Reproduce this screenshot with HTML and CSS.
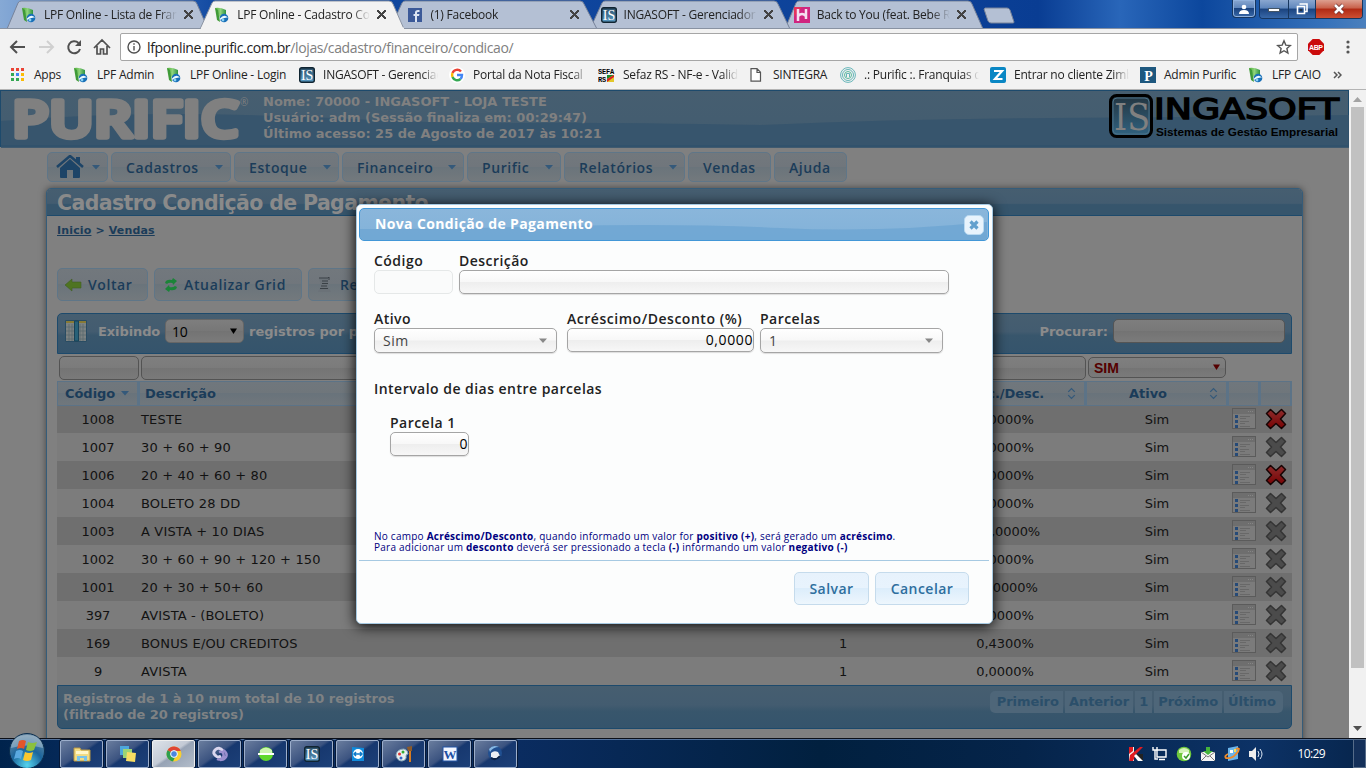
FILE: index.html
```html
<!DOCTYPE html>
<html lang="pt-BR">
<head>
<meta charset="utf-8">
<title>LPF Online - Cadastro Condição de Pagamento</title>
<link rel="stylesheet" href="styles.css">
</head>
<body>
<svg class="defs" aria-hidden="true">
  <defs>
    <linearGradient id="leafg" x1="0" x2="1"><stop offset="0" stop-color="#4fae35"/><stop offset=".5" stop-color="#8ed37c"/><stop offset="1" stop-color="#2d9340"/></linearGradient>
    <linearGradient id="isg" x1="0" y1="0" x2="0" y2="1"><stop offset="0" stop-color="#2a4d66"/><stop offset="1" stop-color="#5b9dc7"/></linearGradient>
    <linearGradient id="redx" x1="0" y1="0" x2="0" y2="1"><stop offset="0" stop-color="#8d2c2c"/><stop offset="1" stop-color="#780304"/></linearGradient>
  </defs>
  <symbol id="i-lpf" viewBox="0 0 16 16"><path d="M1 1q5-1 11 2v9l-5 1z" fill="url(#leafg)"/><path d="M1 1l3 2 2 12-3-2z" fill="#3f9a37"/><circle cx="10" cy="11" r="4.300" fill="#1970b8"/><path d="M6 11.500q4-5 8-1-4-.500-8 2.500z" fill="#eefaff"/><circle cx="9" cy="13" r="1.400" fill="#8bd0f3"/></symbol>
  <symbol id="i-is" viewBox="0 0 16 16"><rect x=".7" y=".7" width="14.600" height="14.600" rx="2" fill="url(#isg)" stroke="#102431" stroke-width="1.400"/><text x="8" y="13" text-anchor="middle" class="t-is">IS</text></symbol>
  <symbol id="i-list" viewBox="0 0 24 22"><rect x=".5" y=".5" width="23" height="20" fill="#7b7b7b" stroke="#5b5b5b"/><path d="M1 1h22v5H1z" fill="#6e6e6e"/><path d="M16 3.500h6" stroke="#858585" stroke-dasharray="1 1"/><path d="M3 7h3v3H3zM3 12h3v3H3zM3 17h3v3H3z" fill="#264a77"/><path d="M8 8.500h10M8 10.500h6M8 13.500h9M8 15.500h5M8 18.500h10" stroke="#686868"/></symbol>
  <symbol id="i-x" viewBox="0 0 22 22"><path d="M5.500 1.500L11 6.500l5.500-5 4 4-5 5.500 5 5.500-4 4-5.500-5-5.500 5-4-4 5-5.500-5-5.500z" stroke-linejoin="round" stroke-width="1.500"/></symbol>
  <symbol id="i-sort" viewBox="0 0 8 12"><path d="M1 4.500L4 1.500l3 3M1 7.500l3 3 3-3" fill="none" stroke="#34597a" stroke-width="1.200"/></symbol>
  <symbol id="i-down" viewBox="0 0 8 5"><path d="M0 0h8L4 4.500z"/></symbol>
</svg>

<div class="browser">
  <div class="tabstrip">
    <svg class="tabshapes" width="1366" height="29">
      <g fill="#b4c0d4" stroke="#77839a">
        <path d="M785 29L796 3q1-2 3-2h169q3 0 4 3l11 25z"/>
        <path d="M590 29L602 3q1-2 3-2h169q3 0 4 3l12 25z"/>
        <path d="M390 29L402 3q1-2 3-2h175q3 0 4 3l13 25z"/>
        <path d="M7 29L18 3q1-2 3-2h172q3 0 4 3l11 25z"/>
        <path d="M985 8h22q2 0 3 2l4 12q0 1-1 1h-22q-2 0-3-2l-4-12z"/>
      </g>
      <path d="M0 28.500h1366" stroke="#8892a2"/>
      <path d="M200 29L212 3q1-2 3-2h174q3 0 4 3l11 25z" fill="#f2f2f2" stroke="#8b94a3"/><path d="M201 28.500h203" stroke="#f2f2f2" stroke-width="2"/>
    </svg>
    <div class="tab"><svg width="16" height="16"><use href="#i-lpf"/></svg><span>LPF Online - Lista de Franquias</span><i class="close"></i></div>
    <div class="tab on"><svg width="16" height="16"><use href="#i-lpf"/></svg><span>LPF Online - Cadastro Condição</span><i class="close"></i></div>
    <div class="tab"><svg width="16" height="16"><rect x="1" y="1" width="14" height="14" fill="#3b5998"/><path d="M8 15V9H6.500V7H8V5.500Q8 3 11 3h1.500v2H11q-1 0-1 1v1h2.500L12 9h-2v6z" fill="#dbe3f1"/></svg><span>(1) Facebook</span><i class="close"></i></div>
    <div class="tab"><svg width="16" height="16"><use href="#i-is"/></svg><span>INGASOFT - Gerenciador</span><i class="close"></i></div>
    <div class="tab"><svg width="16" height="16"><rect width="16" height="16" fill="#d02580"/><path d="M0 0h8L0 10z" fill="#e5335c"/><path d="M4 2v12M12 2v10M4 9q4-4 8 0" stroke="#f5dff0" stroke-width="2.500" fill="none"/></svg><span>Back to You (feat. Bebe Rexha)</span><i class="close"></i></div>
    <div class="winbtns">
      <div class="wb user"><svg width="12" height="12"><circle cx="6" cy="4" r="2.300"/><path d="M1 11q0-4 5-4t5 4z"/></svg></div>
      <div class="wbg"><div class="wb"><svg width="12" height="10"><rect x=".5" y="4.500" width="11" height="3" stroke="#456"/></svg></div><div class="wb"><svg width="12" height="12" class="restore"><path d="M3.500 1h7.500v7.500H9M1.500 3.500h7v7h-7z" fill="none" stroke="#fff" stroke-width="1.600"/><path d="M4 6h2v2H4z" fill="#234"/></svg></div><div class="wb red"><svg width="14" height="12"><path d="M3 2l8 8M11 2l-8 8" stroke="#6b3030" stroke-width="4"/><path d="M3 2l8 8M11 2l-8 8" stroke="#fff" stroke-width="2.600"/></svg></div></div>
    </div>
  </div>

  <div class="toolbar">
    <svg width="112" height="32" class="nav" fill="none" stroke="#505050" stroke-width="2">
      <path d="M17 10l-6 6 6 6M11.500 16H25"/><path d="M47 10l6 6-6 6M52 16H39" stroke="#d0d0d0"/>
      <path d="M78.500 12a6 6 0 1 0 1.500 6"/><path d="M81 9v6h-6z" fill="#505050" stroke="none"/>
      <path d="M94 17l8-8 8 8M97 15v8h3.500v-5h3v5h3.500v-8" stroke-width="1.700"/>
    </svg>
    <div class="urlbar">
      <svg width="14" height="14" fill="none" stroke="#505050" stroke-width="1.400"><circle cx="7" cy="7" r="6"/><path d="M7 6v4.500M7 3.200v1.600"/></svg>
      <span class="url"><b>lfponline.purific.com.br</b>/lojas/cadastro/financeiro/condicao/</span>
      <svg width="16" height="16" fill="none" stroke="#555" stroke-width="1.400"><path d="M8 1.800l1.800 4.300 4.600.4-3.500 3 1 4.600L8 11.700l-3.900 2.400 1-4.600-3.500-3 4.600-.4z"/></svg>
    </div>
    <svg width="16" height="16" class="abp"><path d="M4.700 0h6.600L16 4.700v6.600L11.300 16H4.700L0 11.300V4.700z" fill="#cb0b0b"/><text x="8" y="10.800" text-anchor="middle" textLength="14">ABP</text></svg>
    <svg width="4" height="16" class="dots"><circle cx="2" cy="3" r="1.600"/><circle cx="2" cy="8" r="1.600"/><circle cx="2" cy="13" r="1.600"/></svg>
  </div>

  <div class="bookmarks">
    <div><svg width="16" height="16"><path d="M1 1h3v3H1zM6 1h3v3H6zM11 1h3v3h-3z" fill="#ea4335"/><path d="M1 6h3v3H1zM1 11h3v3H1z" fill="#34a853"/><path d="M6 6h3v3H6z" fill="#4285f4"/><path d="M6 11h3v3H6z" fill="#34a853"/><path d="M11 6h3v3h-3zM11 11h3v3h-3z" fill="#fbbc05"/></svg><span>Apps</span></div>
    <div><svg width="16" height="16"><use href="#i-lpf"/></svg><span>LPF Admin</span></div>
    <div><svg width="16" height="16"><use href="#i-lpf"/></svg><span>LPF Online - Login</span></div>
    <div><svg width="16" height="16"><use href="#i-is"/></svg><span class="cut">INGASOFT - Gerenciador</span></div>
    <div><svg width="16" height="16" fill="none" stroke-width="2.400"><circle cx="8" cy="8" r="8" fill="#fff"/><path d="M12 4.500A5 5 0 0 0 3.500 6" stroke="#ea4335"/><path d="M3.500 6a5 5 0 0 0 0 4" stroke="#fbbc05"/><path d="M3.500 10a5 5 0 0 0 8 2" stroke="#34a853"/><path d="M11.500 12q1.500-1.500 1.500-4H8" stroke="#4285f4"/></svg><span class="cut">Portal da Nota Fiscal</span></div>
    <div><svg width="17" height="16"><text x="0" y="6.500" class="t-sefa" textLength="16">SEFA</text><text x="0" y="14.500" class="t-sefa" textLength="8">RS</text><path d="M9 8h7v7H9z" fill="#e3c72a"/><path d="M9 8h7l-7 4z" fill="#1b8a2c"/><path d="M9 12l7-4v2l-7 5z" fill="#d22"/></svg><span class="cut">Sefaz RS - NF-e - Validador</span></div>
    <div class="doc"><svg width="12" height="16"><path d="M1 1.700h6l3.500 3.500v9H1zM7 2v3.500h3.500" fill="#fff" stroke="#555" stroke-width="1.200"/></svg><span>SINTEGRA</span></div>
    <div><svg width="16" height="16" fill="none" stroke="#66b5b8"><circle cx="8" cy="8" r="7.400"/><circle cx="8" cy="8" r="5.500"/><circle cx="8" cy="8" r="3.500" stroke="#58b89b"/><path d="M6.500 10V6.500h3V10"/></svg><span class="cut">.: Purific :. Franquias de</span></div>
    <div><svg width="16" height="16"><rect width="16" height="16" rx="2" fill="#0a87c4"/><path d="M4 4h8l-7 8h7.500" fill="none" stroke="#fff" stroke-width="2.200"/></svg><span class="cut">Entrar no cliente Zimbra</span></div>
    <div><svg width="16" height="16"><rect width="16" height="16" fill="#1e587f"/><text x="8.500" y="13.500" text-anchor="middle" class="t-p">P</text></svg><span>Admin Purific</span></div>
    <div><svg width="16" height="16"><use href="#i-lpf"/></svg><span>LFP CAIO</span></div>
    <div><svg width="9" height="8" fill="none" stroke="#555" stroke-width="1.500"><path d="M1 1l3 3-3 3M5 1l3 3-3 3"/></svg></div>
  </div>
</div>

<div class="viewport">
  <div class="page">
    <header class="top">
      <svg class="wave" width="1349" height="57" preserveAspectRatio="none"><path d="M0 30Q90 23 170 23T350 28 520 32 760 34Q900 28 1050 27T1349 24V57H0z"/></svg>
      <svg class="purific" width="252" height="57"><text x="11" y="45.500" textLength="227" lengthAdjust="spacingAndGlyphs">PURIFIC</text><text x="239" y="15" class="reg">®</text></svg>
      <div class="userinfo">Nome: 70000 - INGASOFT - LOJA TESTE<br>Usuário: adm (Sessão finaliza em: 00:29:47)<br>Último acesso: 25 de Agosto de 2017 às 10:21</div>
      <svg class="inga" width="232" height="50"><defs><linearGradient id="ib" x1="0" y1="0" x2="0" y2="1"><stop offset="0" stop-color="#23343f"/><stop offset="1" stop-color="#316482"/></linearGradient></defs><rect x="1.500" y="4.500" width="41" height="41" rx="6" fill="url(#ib)" stroke="#000" stroke-width="3"/><rect x="4" y="7" width="36" height="36" rx="4" fill="none" stroke="#4b7187"/><text x="5" y="39" class="big-is" textLength="36" lengthAdjust="spacingAndGlyphs">IS</text><text x="45" y="28" class="inga-name" textLength="185" lengthAdjust="spacingAndGlyphs">INGASOFT</text><text x="47" y="45" class="inga-sub" textLength="182" lengthAdjust="spacingAndGlyphs">Sistemas de Gestão Empresarial</text></svg>
    </header>

    <nav class="menu">
      <div class="btn home"><svg width="28" height="24"><path d="M1 12L14 1l13 11" fill="none" stroke="#1d4467" stroke-width="2.600"/><path d="M4 13l10-9 10 9v9q0 1-1 1h-6v-8h-6v8H5q-1 0-1-1zM20 2h4v7l-4-3z" fill="#1d4467"/></svg><svg class="dn"><use href="#i-down"/></svg></div>
      <div class="btn">Cadastros<svg class="dn"><use href="#i-down"/></svg></div>
      <div class="btn">Estoque<svg class="dn"><use href="#i-down"/></svg></div>
      <div class="btn">Financeiro<svg class="dn"><use href="#i-down"/></svg></div>
      <div class="btn">Purific<svg class="dn"><use href="#i-down"/></svg></div>
      <div class="btn">Relatórios<svg class="dn"><use href="#i-down"/></svg></div>
      <div class="btn">Vendas</div>
      <div class="btn">Ajuda</div>
    </nav>

    <main class="panel">
      <h1>Cadastro Condição de Pagamento</h1>
      <div class="content">
        <div class="crumbs"><u>Inicio</u> &gt; <u>Vendas</u></div>
        <div class="actions">
          <div class="btn"><svg width="17" height="14"><path d="M0 7l7-6v3h9v6H7v3z" fill="#4f7422" stroke="#405e25" stroke-width=".6"/></svg>Voltar</div>
          <div class="btn"><svg width="14" height="16"><path d="M1 6Q2 2 8 3L9 1l4 3-4 4-.500-2Q5 5 3 7zM13 10q-1 4-7 3l-1 2-4-3 4-4 .500 2q3 1 5.500-1z" fill="#1b8439"/></svg>Atualizar Grid</div>
          <div class="btn"><svg width="16" height="17"><path d="M2 2h9v9l3 5H1l2-4 1-2z" fill="#6b7278"/><path d="M2 2h9l1-1v3M5 5h6M5 7.500h6M4 10h6M3 12.500h8" stroke="#3a4146" fill="none"/></svg>Relatório</div>
        </div>

        <div class="gridbar">
          <svg width="22" height="22"><path d="M.5.500h21v21H.500z" fill="#7c8282" stroke="#294c63"/><path d="M1 2h20" stroke="#877a35" stroke-width="2"/><path d="M4 4v17M7 4v17M15 4v17M18 4v17M1 7h20M1 11h20M1 15h20M1 19h20" stroke="#58676f" stroke-width=".7"/><path d="M9.500 1h4v20h-4z" fill="#276178" stroke="#194257"/></svg>
          <span>Exibindo</span><div class="select">10<svg class="dn"><use href="#i-down"/></svg></div><span>registros por página</span>
          <span class="find">Procurar:</span><div class="search"></div>
        </div>

        <div class="filters"><div></div><div></div><div></div><div></div><div class="sim">SIM<svg class="dn"><use href="#i-down"/></svg></div></div>

        <div class="tr thead"><div>Código<svg class="dn"><use href="#i-down"/></svg></div><div>Descrição</div><div>Parcelas</div><div>Acresc./Desc.<svg class="st"><use href="#i-sort"/></svg></div><div>Ativo<svg class="st"><use href="#i-sort"/></svg></div><div></div><div></div></div>
        <div class="tr"><div>1008</div><div>TESTE</div><div>1</div><div>0,0000%</div><div>Sim</div><div><svg><use href="#i-list"/></svg></div><div class="del red"><svg><use href="#i-x"/></svg></div></div>
        <div class="tr"><div>1007</div><div>30 + 60 + 90</div><div>3</div><div>0,0000%</div><div>Sim</div><div><svg><use href="#i-list"/></svg></div><div class="del"><svg><use href="#i-x"/></svg></div></div>
        <div class="tr"><div>1006</div><div>20 + 40 + 60 + 80</div><div>4</div><div>0,0000%</div><div>Sim</div><div><svg><use href="#i-list"/></svg></div><div class="del red"><svg><use href="#i-x"/></svg></div></div>
        <div class="tr"><div>1004</div><div>BOLETO 28 DD</div><div>1</div><div>0,0000%</div><div>Sim</div><div><svg><use href="#i-list"/></svg></div><div class="del"><svg><use href="#i-x"/></svg></div></div>
        <div class="tr"><div>1003</div><div>A VISTA + 10 DIAS</div><div>2</div><div>-10,0000%</div><div>Sim</div><div><svg><use href="#i-list"/></svg></div><div class="del"><svg><use href="#i-x"/></svg></div></div>
        <div class="tr"><div>1002</div><div>30 + 60 + 90 + 120 + 150</div><div>5</div><div>0,0000%</div><div>Sim</div><div><svg><use href="#i-list"/></svg></div><div class="del"><svg><use href="#i-x"/></svg></div></div>
        <div class="tr"><div>1001</div><div>20 + 30 + 50+ 60</div><div>4</div><div>10,0000%</div><div>Sim</div><div><svg><use href="#i-list"/></svg></div><div class="del"><svg><use href="#i-x"/></svg></div></div>
        <div class="tr"><div>397</div><div>AVISTA - (BOLETO)</div><div>1</div><div>0,0000%</div><div>Sim</div><div><svg><use href="#i-list"/></svg></div><div class="del"><svg><use href="#i-x"/></svg></div></div>
        <div class="tr"><div>169</div><div>BONUS E/OU CREDITOS</div><div>1</div><div>0,4300%</div><div>Sim</div><div><svg><use href="#i-list"/></svg></div><div class="del"><svg><use href="#i-x"/></svg></div></div>
        <div class="tr"><div>9</div><div>AVISTA</div><div>1</div><div>0,0000%</div><div>Sim</div><div><svg><use href="#i-list"/></svg></div><div class="del"><svg><use href="#i-x"/></svg></div></div>

        <div class="gridfoot"><div>Registros de 1 à 10 num total de 10 registros<br>(filtrado de 20 registros)</div>
          <div class="pager"><span>Primeiro</span><span>Anterior</span><span>1</span><span>Próximo</span><span>Último</span></div></div>
      </div>
    </main>
  </div>
  <div class="scroll"><svg width="9" height="5"><path d="M0 5h9L4.500 0z" fill="#a3a3a3"/></svg><div class="thumb"></div><svg width="9" height="5"><path d="M0 0h9L4.500 5z" fill="#505050"/></svg></div>
</div>

<section class="dialog">
  <div class="dhead"><svg class="wave" width="627" height="31"><path d="M0 20Q80 20 200 17T420 19 627 13V31H0z"/></svg><span>Nova Condição de Pagamento</span><div class="dclose"><svg width="10" height="10"><path d="M1.500 1.500l7 7M8.500 1.500l-7 7" stroke="#62a0ce" stroke-width="3.200"/></svg></div></div>
  <div class="dbody">
    <div class="row r1"><label>Código<div class="inp off"></div></label><label>Descrição<div class="inp"></div></label></div>
    <div class="row r2"><label>Ativo<div class="inp sel">Sim<svg class="dn"><use href="#i-down"/></svg></div></label><label class="wide">Acréscimo/Desconto (%)<div class="inp num">0,0000</div></label><label>Parcelas<div class="inp sel">1<svg class="dn"><use href="#i-down"/></svg></div></label></div>
    <div class="sub">Intervalo de dias entre parcelas</div>
    <label class="p1">Parcela 1<div class="inp num">0</div></label>
    <p class="hint">No campo <b>Acréscimo/Desconto</b>, quando informado um valor for <b>positivo (+)</b>, será gerado um <b>acréscimo</b>.<br>Para adicionar um <b>desconto</b> deverá ser pressionado a tecla <b>(-)</b> informando um valor <b>negativo (-)</b></p>
  </div>
  <div class="dfoot"><div class="dbtn">Salvar</div><div class="dbtn">Cancelar</div></div>
</section>

<footer class="taskbar">
  <svg class="orb" width="38" height="38" viewBox="0 0 38 38"><defs><radialGradient id="og" cx=".5" cy=".9" r=".9"><stop offset="0" stop-color="#55d4ee"/><stop offset=".5" stop-color="#1b659c"/><stop offset="1" stop-color="#6f8ea6"/></radialGradient></defs><circle cx="19" cy="19" r="17.500" fill="url(#og)" stroke="#0b2d4d"/><path d="M3 16Q4 3 19 3t16 13q-16-5-32 0z" fill="#fff" opacity=".3"/><path d="M11 9q4-2 7 0l-2 8q-3-2-7 0z" fill="#e2562a"/><path d="M20 10q4 2 9 0l-3 8q-4 2-8 0z" fill="#8bc13f"/><path d="M8 19q4-2 7 0l-2 8q-3-2-7 0z" fill="#5aa9e0"/><path d="M17 20q4 2 8 0l-2 8q-4 2-8 0z" fill="#fbc82f"/></svg>
  <div class="tasks">
    <div><svg width="18" height="16"><path d="M1 2h6l1 2h9v11H1z" fill="#f2db83" stroke="#b89744"/><path d="M3 5h12v3H3z" fill="#fff6c9"/><path d="M4 15v-5h10v5h-3v-3H7v3z" fill="#79c3ea"/></svg></div>
    <div><svg width="18" height="18"><rect x="1" y="1" width="9" height="9" fill="#4da7dc"/><rect x="4" y="4" width="9" height="9" fill="#9ad476"/><path d="M8 7l9 1-1 9-9-1z" fill="#f7dd62"/></svg></div>
    <div class="act"><svg width="16" height="16"><circle cx="8" cy="8" r="7.500" fill="#f7cf32"/><path d="M8 8L1.500 4.200A7.500 7.500 0 0 1 14.800 5H8z" fill="#df4534"/><path d="M8 8L1.500 4.200A7.500 7.500 0 0 0 7 15.400L10 9z" fill="#2d9e4f"/><circle cx="8" cy="8" r="3.400" fill="#4a86e0" stroke="#fff"/></svg></div>
    <div><svg width="18" height="16" fill="none" stroke-width="3"><path d="M10 10q-3 2-5 0-4-3-1-6 4-4 8 1" stroke="#dad6ee"/><path d="M8 6q3-1 4 1 2 4-2 6-2 1-4 0M12 4q5 3 3 7-2 3-6 3" stroke="#9b8fce" stroke-width="2.500"/></svg></div>
    <div><svg width="16" height="16"><circle cx="8" cy="8" r="7" fill="#60d82c"/><path d="M2 4q6-5 12 0v3H2z" fill="#cdf5ae"/><rect y="7" width="16" height="2" fill="#fff"/></svg></div>
    <div><svg width="16" height="16"><use href="#i-is"/></svg></div>
    <div><svg width="16" height="16"><path d="M2 1l12 1v13H2z" fill="#108bdc"/><circle cx="8" cy="8" r="5" fill="#fff"/><path d="M4 8h8M6 6L4 8l2 2M10 6l2 2-2 2" fill="none" stroke="#0c79c9" stroke-width="1.500"/></svg></div>
    <div><svg width="18" height="18"><path d="M1 10q1-6 8-6 4 1 4 5-2 0-2 2 1 4-4 5-5 0-6-6z" fill="#e7efee" stroke="#87a7ba"/><circle cx="4.500" cy="9" r="1.500" fill="#d33"/><circle cx="8" cy="7" r="1.500" fill="#3a3"/><circle cx="6" cy="13" r="1.500" fill="#36c"/><path d="M15 6v11" stroke="#d67b20" stroke-width="2"/><path d="M12 2l5-1v5h-4z" fill="#8b5a2b"/></svg></div>
    <div><svg width="16" height="16"><rect x="1" y="1" width="14" height="14" fill="#f2f6ff" stroke="#2254a5"/><text x="8" y="13" text-anchor="middle" class="t-w">W</text></svg></div>
    <div><svg width="17" height="17"><circle cx="8" cy="8" r="7" fill="#204f91"/><path d="M2 4q4-5 10-2-6 0-9 5z" fill="#86b7e3"/><path d="M4 8q3-3 7-1l2 4-4 3-5-2z" fill="#eceff4"/><path d="M4 13q5 3 9-2" stroke="#0c2347" stroke-width="2" fill="none"/></svg></div>
  </div>
  <div class="tray">
    <svg width="16" height="16"><path d="M1 1h5v14H1z" fill="#f1f1f1"/><path d="M2 9L12 1h3L8 8l-3 7H1z" fill="#e11b22"/><path d="M1 1h4v4L1 8z" fill="#e11b22"/><path d="M7 8h8v7h-3z" fill="#222"/><path d="M8 8l7 7h-5L6 10z" fill="#fff"/></svg>
    <svg width="16" height="16" fill="none" stroke="#fff" stroke-width="1.400"><path d="M5 4h9v7H5zM7 13.500h6M3 4v9h3M1 1v3h4V1"/></svg>
    <svg width="16" height="16"><circle cx="8" cy="8" r="7.300" fill="#70c93d"/><path d="M3 4q5-4 10 0v3H3z" fill="#d3f2b8"/><circle cx="10" cy="10" r="4" fill="#fff"/><path d="M8 10l2 2 3-4" fill="none" stroke="#3a9a2a" stroke-width="1.500"/></svg>
    <svg width="16" height="16"><path d="M1 6h14v9H1z" fill="#f4f4f4"/><path d="M1 6l7 5 7-5M1 15l5-5M15 15l-5-5" fill="none" stroke="#777"/><path d="M6 1h4v4h3L8 9 3 5h3z" fill="#45b33c"/></svg>
    <svg width="16" height="16"><path d="M4 2l10-2v13L4 15z" fill="#6bb5eb"/><path d="M4 8q-4 2-2 4 6 1 10-4 3-3 3-5-1-1-3 0" fill="none" stroke="#f08b28" stroke-width="1.800"/><path d="M6 4h3v3H6z" fill="#fff"/><path d="M10 3h2v3h-2z" fill="#fbe152"/></svg>
    <svg width="16" height="16"><path d="M1 5h3l4-4v14l-4-4H1z" fill="#eee"/><path d="M10 5q2 3 0 6M12 3q4 5 0 10" fill="none" stroke="#dfe8f4"/></svg>
  </div>
  <span class="clock">10:29</span><div class="peek"></div>
</footer>
</body>
</html>
```
FILE: styles.css
```css
* { box-sizing: border-box; }
body { margin: 0; width: 1366px; height: 768px; overflow: hidden; position: relative; background: #808080; font-family: "DejaVu Sans", Verdana, sans-serif; }
svg { flex: none; display: block; }
.defs { position: absolute; width: 0; height: 0; }
.t-is { font: 14px "Liberation Serif", serif; fill: #fff; }
.t-p { font: bold 14px "Liberation Serif", serif; fill: #fff; }
.t-w { font: bold 13px "Liberation Serif", serif; fill: #1d4fa5; }
.t-sefa { font: bold 7px "Liberation Mono", monospace; fill: #000; }

/* browser chrome */
.browser { height: 90px; background: #f2f2f2; border-bottom: 1px solid #b4b4b4; font: 12px "Open Sans", sans-serif; color: #222; }
.tabstrip { height: 29px; position: relative; display: flex; background: linear-gradient(90deg, #86a9d5 0, #4a7cc4 8%, #1048a0 16%, #0d4299 65%, #093d93 76%, #2966b9 82%, #0c479d 88%, #3672bb 97%, #4b80bd); }
.tabshapes { position: absolute; left: 0; top: 0; }
.tab { width: 193.200px; height: 29px; padding: 0 0 0 21px; display: flex; align-items: center; position: relative; }
.tab span { width: 133px; margin-left: 7px; overflow: hidden; white-space: nowrap; letter-spacing: -.23px; -webkit-mask-image: linear-gradient(90deg, #000 86%, transparent); }
.close { width: 9px; height: 9px; margin-left: 7px; background: linear-gradient(45deg, transparent 43%, #444 43%, #444 57%, transparent 57%), linear-gradient(-45deg, transparent 43%, #444 43%, #444 57%, transparent 57%); }
.winbtns { position: absolute; right: 3px; top: 0; display: flex; gap: 3px; }
.wb { height: 18px; width: 29px; display: flex; align-items: center; justify-content: center; background: linear-gradient(#8aa7d0, #5f86bc 45%, #1b437f 50%, #3868a8); }
.wb svg { fill: #fff; }
.user { width: 24px; border: 1px solid #17365f; border-top: 0; border-radius: 0 0 4px 4px; box-shadow: inset 0 0 0 1px #8fb0dc; }
.wbg { display: flex; border: 1px solid #17365f; border-top: 0; border-radius: 0 0 4px 4px; overflow: hidden; }
.wbg .wb { width: 29px; border-right: 1px solid #17365f; }
.wbg .wb:nth-child(2) { width: 27px; }
.wbg .red { width: 46px; border: 0; background: linear-gradient(#dda090, #c8604a 45%, #b02a14 50%, #cd4f33); }
.toolbar { height: 34px; display: flex; align-items: center; padding-top: 2px; }
.nav { margin: 0; }
.urlbar { margin-left: 8px; width: 1178px; height: 28px; display: flex; align-items: center; background: #fff; border: 1px solid #a6a6a6; border-radius: 2px; padding: 0 5px 0 6px; }
.url { flex: 1; margin-left: 6px; font-size: 14px; color: #808080; letter-spacing: -.37px; }
.url b { font-weight: 400; color: #222; }
.abp { margin-left: 10px; }
.abp text { font: bold 7px "Liberation Sans", sans-serif; fill: #fff; }
.dots { margin-left: 22px; fill: #555; }
.bookmarks { height: 26px; padding: 0 0 3px 10px; display: grid; grid-template-columns: 63px 93px 133px 150px 149px 152px 90px 150px 150px 108px 85px 20px; align-items: center; margin-top: 0; }
.bookmarks div { display: flex; align-items: center; gap: 8px; white-space: nowrap; letter-spacing: -.22px; }
.bookmarks .doc { gap: 11px; }
.cut { width: 115px; overflow: hidden; -webkit-mask-image: linear-gradient(90deg, #000 86%, transparent); }

/* page */
.viewport { height: 648px; display: flex; }
.page { width: 1349px; height: 648px; overflow: hidden; background: #808080; }
.top { height: 57px; border: 1px solid #1d4a6c; border-bottom-width: 2px; background: linear-gradient(#465e70, #425c70); position: relative; display: flex; }
.wave { position: absolute; left: 0; top: 0; fill: #35546c; fill-opacity: .85; }
.purific, .userinfo, .inga { position: relative; }
.purific text { font: 600 51px "Open Sans", sans-serif; fill: #808080; stroke: #808080; stroke-width: 5.500px; stroke-linejoin: round; stroke-linecap: round; }
.purific .reg { font-size: 10px; font-weight: 400; stroke: none; }
.userinfo { margin: 3px 0 0 10px; font: bold 13px/16px "DejaVu Sans", sans-serif; color: #808080; white-space: nowrap; flex: 1; }
.inga { margin-right: 7px; }
.big-is { font: 38px "DejaVu Serif", serif; fill: #808080; }
.inga-name { font: 400 29px "DejaVu Sans", sans-serif; fill: #000; stroke: #000; stroke-width: 1.500px; }
.inga-sub { font: bold 10.500px "Liberation Sans", sans-serif; fill: #000; }
.btn { display: flex; align-items: center; border: 1px solid #5f7688; border-radius: 5px; background: linear-gradient(#72787d, #70767c 50%, #6a747b 50%, #73797d); color: #1b3c59; font: 600 14px "Open Sans", sans-serif; letter-spacing: .57px; white-space: nowrap; }
.dn { width: 8px; height: 5px; fill: #34597a; }
.menu { margin: 5px 0 0 47px; display: flex; gap: 3px; }
.menu .btn { height: 30px; padding: 0 7px 0 14px; justify-content: space-between; width: 120px; }
.menu .home { width: 61px; padding-left: 8px; }
.menu .btn:nth-child(3) { width: 105px; }
.menu .btn:nth-child(4) { width: 122px; }
.menu .btn:nth-child(5) { width: 94px; }
.menu .btn:nth-child(6) { width: 121px; }
.menu .btn:nth-child(7) { width: 83px; }
.menu .btn:nth-child(8) { width: 73px; }
.panel { margin: 6px 0 0 46px; width: 1257px; height: 580px; border: 1px solid #355c79; border-radius: 5px 5px 0 0; box-shadow: 0 0 7px #444; background: #808080; }
h1 { margin: 0; height: 27px; padding-left: 10px; font: bold 20.500px/29px "DejaVu Sans", sans-serif; color: #8a8a8a; background: linear-gradient(#465e70, #435c70 55%, #36556c 60%, #36556c); border-bottom: 1px solid #1d4a6c; border-radius: 4px 4px 0 0; letter-spacing: -.62px; }
.content { padding: 0 10px; }
.crumbs { font: bold 11px/16px "DejaVu Sans", sans-serif; color: #1b3c59; padding-top: 7px; height: 52px; letter-spacing: .15px; }
.actions { display: flex; gap: 6px; }
.actions .btn { height: 33px; padding: 0 15px 0 7px; gap: 6px; width: 91px; }
.actions .btn:nth-child(2) { width: 148px; padding-left: 9px; letter-spacing: .65px; }
.actions .btn:nth-child(3) { width: 110px; padding-left: 8px; gap: 7px; }
.gridbar { margin-top: 12px; height: 41px; padding: 0 6px 5px 7px; display: flex; align-items: center; border: 1px solid #1d4a6c; border-radius: 5px 5px 0 0; background: linear-gradient(#465e70, #435c70 45%, #38566c 55%, #35546c); color: #8b8b8b; font: bold 13px "DejaVu Sans", sans-serif; }
.gridbar span:nth-of-type(1) { margin-left: 11px; width: 67px; letter-spacing: -.1px; }
.gridbar .select { margin-right: 5px; }
.select { width: 79px; height: 24px; border-radius: 5px; border: 1px solid #666; background: linear-gradient(#7e7e7e, #777 50%, #737373 50%, #7b7b7b); color: #000; font: 14px "Open Sans", sans-serif; letter-spacing: -.3px; padding: 0 6px; display: flex; align-items: center; justify-content: space-between; }
.select .dn, .sim .dn { fill: #000; width: 7px; height: 7px; transform: scaleY(1.4); }
.find { margin-left: auto; margin-right: 5px; }
.search { width: 172px; height: 24px; border-radius: 5px; border: 1px solid #555; background: linear-gradient(#7e7e7e, #787878 50%, #737373 50%, #7b7b7b); }
.filters { margin-top: 2px; display: grid; grid-template-columns: 80px 621px 160px 160px 138px; column-gap: 2px; padding-left: 2px; height: 24px; }
.filters div { border: 1px solid #535353; border-radius: 5px; background: linear-gradient(#7f7f7f, #7b7b7b 50%, #747474 50%, #7a7a7a); }
.filters .sim { height: 21px; margin-top: 1px; color: #500; font: bold 14px "Liberation Sans", sans-serif; display: flex; align-items: center; justify-content: space-between; padding: 0 5px; }
.filters .sim .dn { fill: #500; }
.tr { display: grid; grid-template-columns: 82px 623px 162px 162px 142px 32px 32px; height: 28px; align-items: center; text-align: center; background: #808080; font: 13px "DejaVu Sans", sans-serif; color: #121212; letter-spacing: -.05px; }
.tr:nth-child(even) { background: #6f6f6f; }
.tr:nth-child(odd) { background: #7c7c7c; }
.tr div:nth-child(2) { text-align: left; padding-left: 2px; letter-spacing: .16px; }
.tr div svg { width: 24px; height: 22px; margin: auto; }
.del svg { fill: #4b4b4b; stroke: #343434; }
.del.red svg { fill: url(#redx); stroke: #170303; }
.tr.thead { height: 24px; margin-top: 1px; align-items: stretch; font-weight: bold; color: #1b3c59; background: none; }
.tr.thead div { position: relative; border: 1px solid #5c7387; border-right-width: 2px; background: linear-gradient(#70777d, #6f767b 50%, #69737b 50%, #70777c); line-height: 23px; letter-spacing: -.05px; }
.tr.thead div:nth-child(2) { padding-left: 5px; }
.tr.thead div:first-child { text-align: left; padding-left: 7px; }
.tr.thead div:nth-child(4) { padding-right: 18px; }
.tr.thead div:nth-child(5) { padding-right: 17px; }
.tr.thead .dn { position: absolute; right: 8px; top: 9px; width: 8px; height: 5px; }
.tr.thead .st { position: absolute; right: 8px; top: 5px; width: 9px; height: 13px; }
.gridfoot { height: 44px; padding: 5px 8px 0 5px; display: flex; justify-content: space-between; border: 1px solid #1d4a6c; border-radius: 0 0 5px 5px; background: linear-gradient(#465e70, #435c70 45%, #38566c 60%, #35546c); color: #7f8284; font: bold 13px/16px "DejaVu Sans", sans-serif; letter-spacing: -.04px; }
.pager { height: 22px; display: flex; gap: 2px; color: #2b4f6a; line-height: 22px; border-radius: 5px; overflow: hidden; margin-top: 0; }
.pager span { padding: 0 4px; background: #4e6679; }
.pager span:first-child { padding-left: 7px; }
.pager span:last-child { padding-right: 7px; }
.scroll { width: 17px; background: #f1f1f1; display: flex; flex-direction: column; align-items: center; padding: 7px 0; }
.thumb { width: 13px; height: 561px; background: #c1c1c1; margin: 5px 0 auto; }

/* dialog */
.dialog { position: absolute; left: 356px; top: 204px; width: 637px; height: 420px; padding: 3px 3px 2px 2px; background: #fcfdfd; border: 1px solid #a6c9e2; border-radius: 5px; box-shadow: 0 2px 14px #000; color: #222; font: 600 14px "Open Sans", sans-serif; letter-spacing: .47px; }
.dhead { position: relative; height: 33px; border: 1px solid #4297d7; border-radius: 5px; background: linear-gradient(#8ab6db, #82b2d9); color: #fff; font-weight: 700; display: flex; align-items: center; justify-content: space-between; padding: 0 4px 0 15px; overflow: hidden; }
.dhead .wave { fill: #6ea6d2; fill-opacity: .85; }
.dhead span { position: relative; letter-spacing: .37px; padding-bottom: 2px; }
.dclose { position: relative; width: 20px; height: 20px; border: 1px solid #bad9f0; border-radius: 5px; background: #e8f3fc; display: flex; align-items: center; justify-content: center; }
.dbody { height: 320px; padding: 10px 15px 0; border-bottom: 1px solid #a6c9e2; }
.row { display: flex; height: 58px; }
label { display: block; line-height: 19px; }
.inp { height: 24px; border: 1px solid #a5a5a5; border-radius: 5px; background: linear-gradient(#fff, #f8f8f8 48%, #eee 52%, #f7f7f7); box-shadow: 0 1px 1px #ddd; font-weight: 400; color: #000; line-height: 22px; }
.off { border-color: #e5e8e8; background: #fafbfb; box-shadow: none; width: 79px; }
.r1 { gap: 6px; }
.r1 label:last-child .inp { width: 490px; }
.r2 { gap: 10px; }
.r2 .sel { width: 183px; height: 25px; display: flex; align-items: center; justify-content: space-between; padding: 0 9px 0 8px; color: #444; }
.sel .dn { fill: #888; height: 6px; }
.r2 .wide { width: 183px; letter-spacing: .53px; white-space: nowrap; }
.wide .inp { width: 187px; letter-spacing: .6px; }
.num { text-align: right; padding-right: 0; }
.sub { margin-top: 12px; line-height: 19px; }
.p1 { margin: 15px 0 0 16px; }
.p1 .inp { width: 79px; }
.hint { margin: 75px 0 0; font: 10px/11px "Open Sans", sans-serif; color: #000080; white-space: nowrap; letter-spacing: .24px; }
.hint b { font-weight: 700; }
.dfoot { display: flex; justify-content: flex-end; gap: 6px; padding: 11px 20px 0; }
.dbtn { height: 33px; width: 75px; border: 1px solid #c5dbec; border-radius: 5px; background: linear-gradient(#e7f2fc, #e8f3fd 50%, #dcedfb 50%, #edf6fd); color: #2e6e9e; text-align: center; line-height: 32px; }
.dbtn:last-child { width: 94px; }

/* taskbar */
.taskbar { position: relative; height: 30px; border-top: 1px solid #0b0f18; background: linear-gradient(90deg, #00234c, #0a2f66 10%, #0a2c60 38%, #01203f 60%, #05244a 75%, #0c3266 92%, #07254c); display: flex; align-items: center; box-shadow: inset 0 1px #53719a; }
.orb { position: absolute; left: 8px; top: -7px; }
.tasks { display: flex; gap: 3px; margin-left: 60px; padding-top: 0; }
.tasks div { width: 43px; height: 28px; border: 1px solid #9caecb; border-radius: 2px; background: linear-gradient(145deg, #6a7d9e, #3b5380 46%, #17386f 52%, #1c4078); display: flex; align-items: center; justify-content: center; box-shadow: 0 0 0 1px #061937; }
.tasks .act { background: linear-gradient(145deg, #dde2e9, #c3cad5 46%, #97a3b5 52%, #b3bdca); border-color: #eee; }
.tray { margin-left: auto; display: flex; gap: 8px; }
.clock { margin: 0 28px 0 33px; font: 12px "Open Sans", sans-serif; color: #fff; letter-spacing: -.6px; }
.peek { width: 13px; height: 29px; border: 1px solid #566c89; background: #14305a; }
```
